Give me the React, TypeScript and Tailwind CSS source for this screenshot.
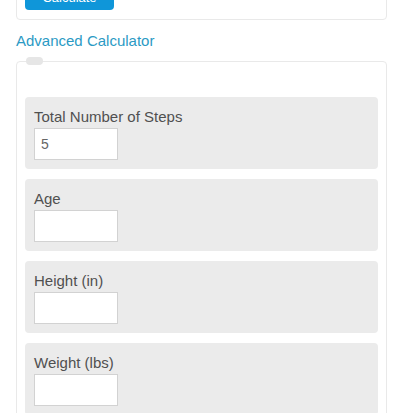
const fields = [
  { label: 'Total Number of Steps', value: '5' },
  { label: 'Age', value: '' },
  { label: 'Height (in)', value: '' },
  { label: 'Weight (lbs)', value: '' },
]

export default function App() {
  return (
    <div
      className="h-[413px] w-[413px] overflow-hidden bg-white pl-4"
      style={{ fontFamily: '"Liberation Sans", Arial, sans-serif' }}
    >
      <div className="w-[371px]">
        {/* top calculator card, cut by the window */}
        <div className="-mt-[24px] rounded-[4px] border border-[#e9e9e9] px-2 pb-[9px] pt-[9px]">
          <button className="flex h-[24px] w-[89px] items-center justify-center rounded-[4px] bg-[#0f96d9] text-[13px] text-white">
            Calculate
          </button>
        </div>

        <div className="mb-[10px] mt-[10px] text-[15px] leading-[21px] text-[#2b9ac4]">
          Advanced Calculator
        </div>

        <div className="relative rounded-[4px] border border-[#e9e9e9] px-2 pt-[35px] pb-4">
          <span className="absolute -top-[5px] left-[9px] h-[8px] w-[17px] rounded-full bg-[#e6e6e6]" />
          <div className="flex flex-col gap-[10px]">
            {fields.map((f) => (
              <div key={f.label} className="rounded-[4px] bg-[#ebebeb] px-[9px] py-[9px]">
                <div className="text-[15px] leading-[21px] text-[#505050]">{f.label}</div>
                <input
                  defaultValue={f.value}
                  className="mt-[1px] block h-[32px] w-[84px] border border-[#d2d2d2] bg-white px-[6px] text-[14px] text-[#666] outline-none"
                />
              </div>
            ))}
          </div>
        </div>
      </div>
    </div>
  )
}
